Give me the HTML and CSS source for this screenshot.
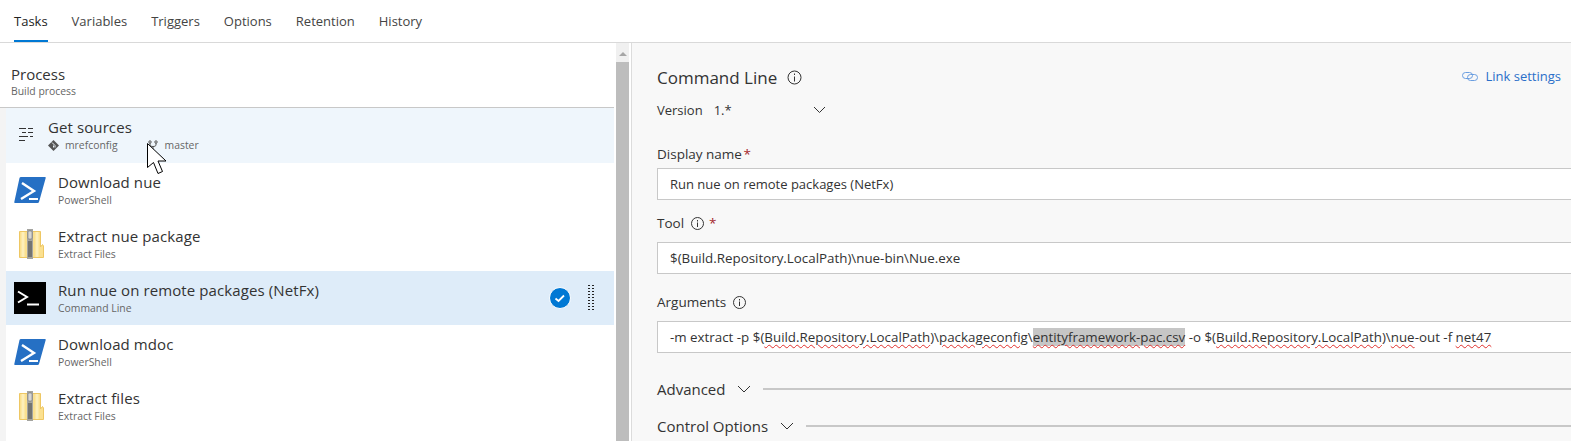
FILE: index.html
```html
<!DOCTYPE html>
<html lang="en">
<head>
    <meta charset="UTF-8">
    <title>Build definition - Tasks</title>
    <link rel="stylesheet" href="styles.css">
</head>
<body>

    <div class="tabs">
        <div class="tab active">Tasks</div>
        <div class="tab">Variables</div>
        <div class="tab">Triggers</div>
        <div class="tab">Options</div>
        <div class="tab">Retention</div>
        <div class="tab">History</div>
    </div>

    <div class="editor">
        <div class="left-pane">
            <div class="process-head">
                <div class="process-title">Process</div>
                <div class="process-sub">Build process</div>
            </div>
            <div class="task-list">
                <div class="task sources">
                    <svg class="sources-icon" width="14" height="13" viewBox="0 0 14 13">
                        <path d="M0 .5h7M9 .5h5M3 4.500h4M9 4.500h5M0 8.500h9M11 8.500h3M0 12.500h6" stroke="#333" stroke-width="1" fill="none"/>
                    </svg>
                    <div class="task-text">
                        <div class="task-name">Get sources</div>
                        <div class="source-meta">
                            <svg width="11" height="11" viewBox="0 0 11 11"><path d="M5.500 0 11 5.500 5.500 11 0 5.500z" fill="#555"/><path d="M4 2.500l3 3v2M5.500 5.500v2" stroke="#eff6fc" fill="none"/></svg>
                            <span class="repo">mrefconfig</span>
                            <svg width="10" height="10" viewBox="0 0 10 10"><path d="M2 3v2c0 2 6 2 6 0V3M5 6v4" stroke="#555" fill="none"/><circle cx="2" cy="2" r="1.200" stroke="#555" fill="none"/><circle cx="8" cy="2" r="1.200" stroke="#555" fill="none"/></svg>
                            <span class="branch">master</span>
                        </div>
                    </div>
                </div>

                <div class="task">
                    <svg class="task-icon" width="32" height="26" viewBox="0 0 32 26">
                        <path d="M7 0h24q1 0 .7 1L25 25q-.3 1-1.500 1H1q-1 0-.7-1L5.500 1Q5.800 0 7 0z" fill="#2670c4"/>
                        <path d="M8 6l12 8-13 8" stroke="#fff" stroke-width="2.400" fill="none"/>
                        <path d="M15 22h9" stroke="#fff" stroke-width="2"/>
                    </svg>
                    <div class="task-text">
                        <div class="task-name">Download nue</div>
                        <div class="task-type">PowerShell</div>
                    </div>
                </div>

                <div class="task">
                    <svg class="task-icon" width="32" height="30" viewBox="0 0 32 30">
                        <path d="M5.500 2.500h21v15.500l2-2.500 1 1.500v11.500h-24z" fill="#fbe08f" stroke="#eec763"/>
                        <path d="M9 3v25M23 3v25" stroke="#fdeeb9" stroke-width="3"/>
                        <rect x="13" y="0" width="6" height="30" fill="#a4a4a0"/>
                        <path d="M14 13h4M14 15h4M14 17h4M14 19h4M14 21h4M14 23h4M14 25h4M14 27h4" stroke="#444"/>
                        <rect x="14" y="2" width="4" height="8" rx="1" fill="#d5d5d5" stroke="#666" stroke-width=".5"/>
                    </svg>
                    <div class="task-text">
                        <div class="task-name">Extract nue package</div>
                        <div class="task-type">Extract Files</div>
                    </div>
                </div>

                <div class="task selected">
                    <svg class="task-icon" width="32" height="32" viewBox="0 0 32 32">
                        <rect width="32" height="32" fill="#000"/>
                        <path d="M4 9.500l9 5.500-9 5.500" stroke="#fff" stroke-width="2" fill="none"/>
                        <path d="M13 22.500h12" stroke="#fff" stroke-width="2"/>
                    </svg>
                    <div class="task-text">
                        <div class="task-name">Run nue on remote packages (NetFx)</div>
                        <div class="task-type">Command Line</div>
                    </div>
                    <svg class="check" width="22" height="22" viewBox="0 0 22 22">
                        <circle cx="11" cy="11" r="10.500" fill="#0078d4" stroke="#fff"/>
                        <path d="M6.500 11.500l3 2.500 5.500-5.500" stroke="#fff" stroke-width="1.800" fill="none"/>
                    </svg>
                    <div class="gripper"></div>
                </div>

                <div class="task">
                    <svg class="task-icon" width="32" height="26" viewBox="0 0 32 26">
                        <path d="M7 0h24q1 0 .7 1L25 25q-.3 1-1.500 1H1q-1 0-.7-1L5.500 1Q5.800 0 7 0z" fill="#2670c4"/>
                        <path d="M8 6l12 8-13 8" stroke="#fff" stroke-width="2.400" fill="none"/>
                        <path d="M15 22h9" stroke="#fff" stroke-width="2"/>
                    </svg>
                    <div class="task-text">
                        <div class="task-name">Download mdoc</div>
                        <div class="task-type">PowerShell</div>
                    </div>
                </div>

                <div class="task">
                    <svg class="task-icon" width="32" height="30" viewBox="0 0 32 30">
                        <path d="M5.500 2.500h21v15.500l2-2.500 1 1.500v11.500h-24z" fill="#fbe08f" stroke="#eec763"/>
                        <path d="M9 3v25M23 3v25" stroke="#fdeeb9" stroke-width="3"/>
                        <rect x="13" y="0" width="6" height="30" fill="#a4a4a0"/>
                        <path d="M14 13h4M14 15h4M14 17h4M14 19h4M14 21h4M14 23h4M14 25h4M14 27h4" stroke="#444"/>
                        <rect x="14" y="2" width="4" height="8" rx="1" fill="#d5d5d5" stroke="#666" stroke-width=".5"/>
                    </svg>
                    <div class="task-text">
                        <div class="task-name">Extract files</div>
                        <div class="task-type">Extract Files</div>
                    </div>
                </div>
            </div>
        </div>

        <div class="scrollbar">
            <div class="scroll-up"></div>
            <div class="scroll-thumb"></div>
        </div>

        <div class="right-pane">
            <div class="title-row">
                <h2>Command Line</h2>
                <svg class="info-big" width="15" height="15" viewBox="0 0 15 15"><circle cx="7.500" cy="7.500" r="6.500" stroke="#333" fill="none"/><path d="M7.500 6.500v5M7.500 3.500v1.500" stroke="#333"/></svg>
                <a class="link-settings">
                    <svg width="16" height="11" viewBox="0 0 16 11"><rect x=".5" y="1.500" width="10" height="6" rx="3" stroke="#6a9ee0" fill="none"/><rect x="5.500" y="3.500" width="10" height="6" rx="3" stroke="#6a9ee0" fill="none"/></svg>
                    Link settings
                </a>
            </div>
            <div class="version-row">
                <span class="version-label">Version</span>
                <span class="version-value">1.*</span>
                <svg width="13" height="8" viewBox="0 0 13 8"><path d="M1 1l5.500 5.500L12 1" stroke="#333" fill="none"/></svg>
            </div>

            <label class="field-label first">Display name <span class="req tight">*</span></label>
            <div class="field short">Run nue on remote packages (NetFx)</div>

            <label class="field-label">Tool
                <svg class="info" width="13" height="13" viewBox="0 0 13 13"><circle cx="6.500" cy="6.500" r="6" stroke="#333" fill="none"/><path d="M6.500 5.500v4.500M6.500 3v1.500" stroke="#333"/></svg>
                <span class="req">*</span></label>
            <div class="field">$(Build.Repository.LocalPath)\nue-bin\Nue.exe</div>

            <label class="field-label args">Arguments
                <svg class="info" width="13" height="13" viewBox="0 0 13 13"><circle cx="6.500" cy="6.500" r="6" stroke="#333" fill="none"/><path d="M6.500 5.500v4.500M6.500 3v1.500" stroke="#333"/></svg>
            </label>
            <div class="field">-m extract -p $(<span class="typo">Build.Repository.LocalPath</span>)\<span class="typo">packageconfig</span>\<span class="typo picked">entityframework-pac.csv</span> -o $(<span class="typo">Build.Repository.LocalPath</span>)\<span class="typo">nue</span>-out -f <span class="typo">net47</span></div>

            <div class="section advanced">
                <span>Advanced</span>
                <svg width="14" height="8" viewBox="0 0 14 8"><path d="M1 1l6 6 6-6" stroke="#333" fill="none"/></svg>
                <div class="section-line"></div>
            </div>
            <div class="section">
                <span>Control Options</span>
                <svg width="14" height="8" viewBox="0 0 14 8"><path d="M1 1l6 6 6-6" stroke="#333" fill="none"/></svg>
                <div class="section-line"></div>
            </div>
        </div>
    </div>

    <!-- mouse pointer from the capture -->
    <svg class="pointer" width="20" height="33" viewBox="0 0 20 33">
        <path d="M.5.500v24l6-5 4.500 11 4.500-2-4.500-10.500h8z" fill="#fff" stroke="#000"/>
    </svg>

</body>
</html>
```

FILE: styles.css
```css
html, body {
    height: 100%;
}
body {
    font-family: "Open Sans", Arial, sans-serif;
    margin: 0;
    background-color: #fff;
    color: #333;
    overflow: hidden;
    position: relative;
}

.tabs {
    display: flex;
    gap: 24px;
    height: 42px;
    padding-left: 14px;
    border-bottom: 1px solid #d9d9d9;
}
.tab {
    font-size: 13px;
    line-height: 42px;
    height: 41px;
    color: #444;
}
.tab.active {
    color: #222;
    border-bottom: 2px solid #0078d4;
    height: 40px;
}

.editor {
    display: flex;
    height: 398px;
}

.left-pane {
    width: 614px;
    flex-shrink: 0;
}
.process-head {
    height: 65px;
    padding-left: 11px;
    box-sizing: border-box;
    border-bottom: 1px solid #c8c8c8;
    padding-top: 21px;
}
.process-title {
    font-size: 15px;
    line-height: 20px;
}
.process-sub {
    font-size: 10.400px;
    line-height: 14px;
    color: #666;
}
.task-list {
    border-left: 6px solid #f4f4f4;
    height: 333px;
}
.task {
    display: flex;
    align-items: center;
    height: 54px;
    padding-left: 8px;
}
.task.sources {
    background-color: #eff6fc;
    height: 55px;
}
.task.selected {
    background-color: #deecf9;
}
.task-icon {
    flex-shrink: 0;
    margin-right: 12px;
}
.sources-icon {
    margin: -2px 15px 0 5px;
    flex-shrink: 0;
}
.task-text {
    flex: 1;
    margin-top: -2px;
}
.task-name {
    font-size: 15px;
    letter-spacing: 0.1px;
    line-height: 20px;
    margin-bottom: 1px;
    color: #333;
}
.task-type {
    font-size: 10.400px;
    line-height: 14px;
    color: #666;
}
.source-meta {
    display: flex;
    align-items: center;
    font-size: 10.400px;
    line-height: 14px;
    color: #666;
}
.repo {
    margin: 0 30px 0 6px;
}
.branch {
    margin-left: 7px;
}
.check {
    margin-right: 16px;
}
.gripper {
    width: 8px;
    height: 28px;
    margin-right: 19px;
    background-image: radial-gradient(#222 1.200px, transparent 1.400px);
    background-size: 4px 3px;
}

.scrollbar {
    width: 13px;
    margin-left: 2px;
    background-color: #f0f0f0;
    flex-shrink: 0;
}
.scroll-up {
    height: 19px;
    box-sizing: border-box;
    padding-top: 9px;
}
.scroll-up::after {
    content: "";
    display: block;
    width: 0;
    margin: 0 auto;
    border-left: 4px solid transparent;
    border-right: 4px solid transparent;
    border-bottom: 4px solid #a6a6a6;
}
.scroll-thumb {
    height: 379px;
    background-color: #bdbdbd;
}

.right-pane {
    flex: 1;
    margin-left: 2px;
    border-left: 1px solid #dcdcdc;
    background-color: #f8f8f8;
    padding-left: 25px;
    overflow: hidden;
}
.title-row {
    display: flex;
    align-items: center;
    gap: 10px;
    margin-top: 22px;
    height: 24px;
}
h2 {
    font-size: 17px;
    font-weight: normal;
    margin: 0;
}
.link-settings {
    margin-left: auto;
    margin-right: 10px;
    margin-top: -2px;
    display: flex;
    align-items: center;
    gap: 7px;
    font-size: 13px;
    color: #2a6fc9;
}
.version-row {
    display: flex;
    align-items: center;
    font-size: 13px;
    height: 20px;
    margin-top: 11px;
}
.version-value {
    margin-left: 11px;
    margin-right: 81px;
}
.field-label {
    display: block;
    font-size: 13.500px;
    line-height: 18px;
    height: 18px;
    margin-bottom: 10px;
    padding-top: 14px;
}
.field-label.first {
    padding-top: 25px;
    margin-bottom: 5px;
}
.field-label.args {
    padding-top: 19px;
}
.field-label .info {
    margin: 0 2px 0 3px;
    vertical-align: -2px;
}
.req {
    color: #a4262c;
}
.req.tight {
    margin-left: -2px;
}
.field {
    height: 32px;
    box-sizing: border-box;
    width: 1000px;
    border: 1px solid #c8c8c8;
    background-color: #fff;
    padding-left: 12px;
    font-size: 13.350px;
    line-height: 30px;
    white-space: nowrap;
    color: #333;
}
.field.short {
    font-size: 13px;
}
.typo {
    text-decoration: underline wavy #e0302c 1px;
    text-underline-offset: 2px;
}
.picked {
    background-color: #c6c6c6;
}
.section {
    display: flex;
    align-items: center;
    gap: 12px;
    height: 37px;
    font-size: 15px;
}
.section.advanced {
    margin-top: 17px;
}
.section-line {
    flex: 1;
    border-top: 2px solid #c8c8c8;
}

.pointer {
    position: absolute;
    left: 147px;
    top: 143px;
}
```
